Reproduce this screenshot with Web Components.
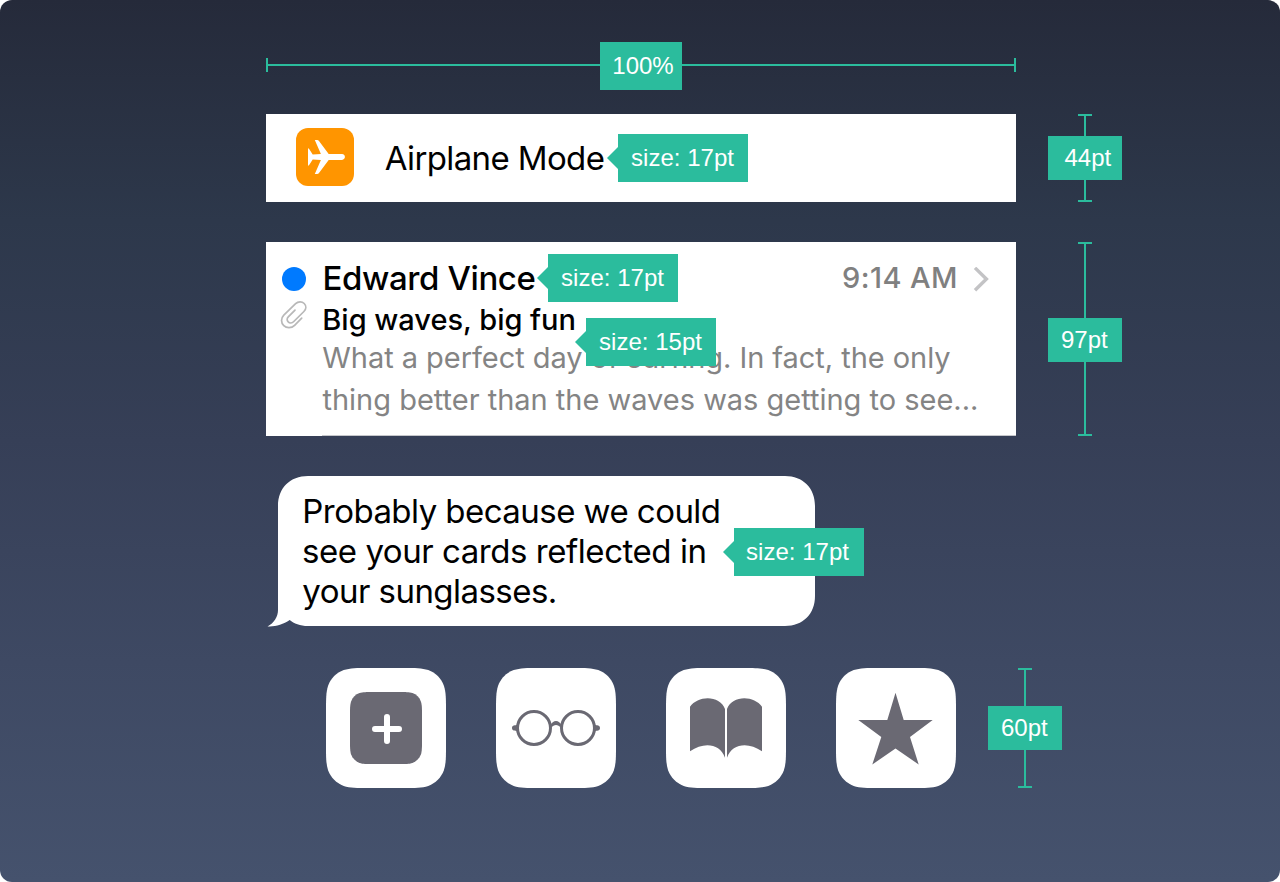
<!DOCTYPE html>
<html lang="en">
<head>
<meta charset="utf-8">
<title>Size specification</title>
<style>
  html, body { margin: 0; height: 100%; background: #fff; }
  body { font-family: Inter, "Liberation Sans", sans-serif; overflow: hidden; }
</style>
</head>
<body>
<spec-board>
  <h-ruler>100%</h-ruler>
  <spec-row>
    <setting-row><fit-line ink="219" size="33" dx="-1.3">Airplane Mode</fit-line></setting-row>
    <size-tag style="--x:352px;--y:20px">size: 17pt</size-tag>
    <v-ruler style="--shift:4px">44pt</v-ruler>
  </spec-row>
  <spec-row style="--mt:40px">
    <mail-row>
      <fit-line slot="name" ink="210" size="33" weight="500" dx="1.5">Edward Vince</fit-line>
      <fit-line slot="time" ink="113" size="29" weight="500" dx="2">9:14 AM</fit-line>
      <fit-line slot="subject" ink="250.500" size="29" weight="500" dx="1.3">Big waves, big fun</fit-line>
      <fit-line slot="body1" ink="628" size="29" dx="-.7">What a perfect day of surfing. In fact, the only</fit-line>
      <fit-line slot="body2" ink="654.500" size="29" dx=".5">thing better than the waves was getting to see...</fit-line>
    </mail-row>
    <size-tag style="--x:282px;--y:12px">size: 17pt</size-tag>
    <size-tag style="--x:320px;--y:76px">size: 15pt</size-tag>
    <v-ruler style="--shift:-1px;--drop:2px">97pt</v-ruler>
  </spec-row>
  <spec-row style="--mt:40px">
    <chat-bubble>
      <fit-line ink="414.500" size="33" dx="1.3">Probably because we could</fit-line>
      <fit-line ink="401.500" size="33">see your cards reflected in</fit-line>
      <fit-line ink="252.500" size="33" dx="-.7">your sunglasses.</fit-line>
    </chat-bubble>
    <size-tag style="--x:468px;--y:52px;--pad:12px">size: 17pt</size-tag>
  </spec-row>
  <spec-row style="--mt:42px;--indent:60px">
    <icon-strip>
      <app-tile icon="plus"></app-tile>
      <app-tile icon="glasses"></app-tile>
      <app-tile icon="book"></app-tile>
      <app-tile icon="star"></app-tile>
    </icon-strip>
    <v-ruler style="--shift:-1px">60pt</v-ruler>
  </spec-row>
</spec-board>

<script>
const define = (name, html, setup) => customElements.define(name, class extends HTMLElement {
  constructor() {
    super();
    const t = document.createElement('template');
    t.innerHTML = html;
    this.attachShadow({ mode: 'open' }).append(t.content.cloneNode(true));
  }
  connectedCallback() { if (setup) setup(this, this.shadowRoot); }
});

define('spec-board', `<style>
  :host { display: flex; flex-direction: column; box-sizing: border-box; width: 1280px; height: 882px;
    padding: 42px 0 0 266px; border-radius: 12px;
    background: linear-gradient(#252a3a 0, #2d384b 25%, #363f57 50%, #3e4963 75%, #45526d 100%); }
</style><slot></slot>`);

define('spec-row', `<style>
  :host { display: flex; position: relative; gap: 32px; margin-top: var(--mt, 24px); padding-left: var(--indent, 0); }
</style><slot></slot>`);

define('h-ruler', `<style>
  :host { display: flex; align-items: center; width: 750px; height: 48px; color: #fff; font: 24px "Liberation Sans", Arial, sans-serif; }
  i { width: 2px; height: 14px; background: #2bbc9d; margin-top: -2px; }
  b { flex: none; width: 332px; height: 2px; background: #2bbc9d; margin-top: -2px; }
  b.r { flex: 1; }
  span { width: 82px; line-height: 48px; box-sizing: border-box; padding-left: 4px; text-align: center; background: #2bbc9d; }
</style><i></i><b></b><span><slot></slot></span><b class="r"></b><i></i>`);

define('v-ruler', `<style>
  :host { display: flex; flex-direction: column; align-items: center; width: 74px; color: #fff; font: 24px "Liberation Sans", Arial, sans-serif; }
  i { width: 14px; height: 2px; background: #2bbc9d; }
  b { flex: 1; width: 2px; background: #2bbc9d; }
  b.top { padding-top: var(--drop, 0); }
  span { width: 74px; line-height: 44px; text-align: center; text-indent: calc(var(--shift, 0px) * 1.4); background: #2bbc9d; }
</style><i></i><b class="top"></b><span><slot></slot></span><b></b><i></i>`);

define('size-tag', `<style>
  :host { position: absolute; left: var(--x); top: var(--y); width: 130px; height: 48px; box-sizing: border-box; padding-left: var(--pad, 13px);
    background: #2bbc9d; color: #fff; font: 24px/48px "Liberation Sans", Arial, sans-serif; letter-spacing: .03px; white-space: nowrap; }
  :host::before { content: ""; position: absolute; left: -11px; top: 12.5px; border: solid transparent; border-width: 11.5px 11px 11.5px 0; border-right-color: #2bbc9d; }
</style><slot></slot>`);

/* One line of copy whose tracking is set so that its visible glyphs span the "ink" width. */
define('fit-line', `<style>
  :host { display: block; white-space: nowrap; font-family: Inter, "Liberation Sans", sans-serif; font-kerning: normal; }
</style><slot></slot>`, el => {
  const size = +el.getAttribute('size'), weight = el.getAttribute('weight') || '400';
  const text = el.textContent;
  const ctx = document.createElement('canvas').getContext('2d');
  ctx.font = `${weight} ${size}px Inter`;
  const m = ctx.measureText(text);
  const ink = m.actualBoundingBoxRight + m.actualBoundingBoxLeft;
  el.style.fontSize = size + 'px';
  el.style.fontWeight = weight;
  el.style.letterSpacing = (+el.getAttribute('ink') - ink) / (text.length - 1) + 'px';
  el.style.marginLeft = m.actualBoundingBoxLeft + (+el.getAttribute('dx') || 0) + 'px';
});

define('setting-row', `<style>
  :host { display: flex; align-items: center; box-sizing: border-box; width: 750px; height: 88px; padding-left: 30px; gap: 32px; background: #fff; color: #000; line-height: 40px; }
  svg { display: block; margin-top: -2px; }
</style><svg width="58" height="58" viewBox="0 0 58 58"><rect width="58" height="58" rx="12" fill="#ff9500"/>
<path fill="#fff" d="M12 20.3L13 20.7L16.7 26.5L24.9 26.1L18.800 12H21.200Q22.300 12 23 13L32.700 26.100H46C49.900 26.300 49.900 31.700 46 31.900H32.700L23 45Q22.300 46 21.200 46H18.800L24.900 31.900L16.700 31.500L13 37.300L12 37.700Z"/></svg><slot></slot>`);

define('mail-row', `<style>
  :host { display: grid; grid-template-columns: 57px 1fr; align-content: start; box-sizing: border-box; width: 750px; height: 194px; padding-top: 15px; background: #fff; color: #000; }
  .marks { display: flex; flex-direction: column; padding: 10px 0 0 14px; }
  .dot { width: 24px; height: 24px; margin-left: 2px; border-radius: 50%; background: #007aff; }
  .clip { margin-top: 10px; overflow: visible; }
  .head { display: flex; line-height: 42px; }
  .time { margin-left: auto; margin-right: 18px; color: #808080; line-height: 41px; width: 114px; }
  .chev { margin: 10px 27px 0 0; }
  .sub { line-height: 41px; }
  .b1 { line-height: 35px; color: #848484; }
  .b2 { line-height: 49px; color: #848484; margin-left: -1px; }
  .rule { grid-column: 1 / 3; height: 1px; margin: 11px 0 0 56px; background: #c6c7cb; }
</style>
<div class="marks"><div class="dot"></div>
<svg class="clip" width="28" height="28" viewBox="0 0 28 28" fill="none" stroke="#b8b8b8" stroke-width="1.7" stroke-linecap="round"><path d="M21.7 17.2L14.6 24.3C11.4 27.4 6.6 27.4 3.8 24.6C.8 21.6 .8 17.2 3.8 14.1L15.6 2.7C18.2 .2 21.9 .2 24.2 2.5C26.4 4.7 26.4 8 23.9 10.5L13.8 20.5C12 22.3 9.6 22.3 8.2 20.9C6.7 19.4 6.8 17.3 8.5 15.6L15 9.2"/></svg></div>
<div>
<div class="head"><slot name="name"></slot><div class="time"><slot name="time"></slot></div>
<svg class="chev" width="16" height="26" viewBox="0 0 16 26" fill="none" stroke="#c3c3c5" stroke-width="3.4"><path d="M2 .9L13.4 12L2 23.2"/></svg></div>
<div class="sub"><slot name="subject"></slot></div>
<div class="b1"><slot name="body1"></slot></div>
<div class="b2"><slot name="body2"></slot></div>
</div><div class="rule"></div>`);

define('chat-bubble', `<style>
  :host { display: grid; width: 549px; height: 150px; color: #000; line-height: 40px; }
  svg, div { grid-area: 1 / 1; }
  svg { overflow: visible; }
  div { padding: 15px 0 0 37px; }
</style><svg width="549" height="150" viewBox="0 0 549 150"><path fill="#fff" d="M12 30C12 12 24 0 42 0H519C537 0 549 12 549 30V120C549 138 537 150 519 150H42C34 150 28 147.5 23.7 144C17 148.5 9 151 1.5 150.4C8 147 12 141 12 134Z"/></svg>
<div><slot></slot></div>`);

define('icon-strip', `<style>:host { display: flex; gap: 50px; }</style><slot></slot>`);

/* Continuous-corner square: each corner is three cubic segments, scaled by r. */
const squircle = (x, y, s, r) => {
  const a = 1.52866, b = 1.08849, c = .86841, d = .63149, e = .07491, f = .37283, g = .16906;
  const q = [[a,0],[b,0],[c,0],[d,e],[f,g],[g,f],[e,d],[0,c],[0,b],[0,a]];
  const corner = (fx, fy, rev) => (rev ? [...q].reverse() : q).map(([u, v]) =>
    [(fx ? x + s - u * r : x + u * r).toFixed(2), (fy ? y + s - v * r : y + v * r).toFixed(2)].join(' '));
  return 'M' + [corner(0,0,false), corner(0,1,true), corner(1,1,false), corner(1,0,true)]
    .map(p => p[0] + 'C' + p.slice(1).join(' ')).join('L') + 'Z';
};
const icons = {
  plus: `<path d="${squircle(24, 24, 72, 15)}"/><path d="M61 49V73M49 61H73" stroke="#fff" stroke-width="6" stroke-linecap="round"/>`,
  glasses: `<g fill="none" stroke="#6a6973" stroke-width="3"><circle cx="38" cy="60" r="16.5"/><circle cx="82" cy="60" r="16.5"/></g>
    <path d="M54.500 57.500C56.500 51.500 63.500 51.500 65.500 57.500L64.500 59.500C62.500 56 57.500 56 55.500 59.500Z"/>
    <path d="M21 56.800C19.500 57.800 16 56.600 16 60S19.500 62.200 21 63.200ZM99 56.800C100.500 57.800 104 56.600 104 60S100.500 62.200 99 63.200Z"/>`,
  book: `<path d="M24 38.800C32 27 54 27 59 41V89.700C54 75.500 38 73.500 24 83.200ZM96 38.800C88 27 66 27 61 41V89.700C66 75.500 82 73.500 96 83.200Z"/>`,
  star: `<path d="M59.500 24.700L67.700 52H96.700L74 69L82.700 96.500L59.500 80.500L36.300 96.500L45.300 69L22.300 52H51.300Z"/>`
};
define('app-tile', `<style>:host { display: block; width: 120px; height: 120px; } svg { display: block; }</style>`, (el, root) => {
  root.innerHTML += `<svg width="120" height="120" viewBox="0 0 120 120" fill="#6a6973"><path fill="#fff" d="${squircle(0, 0, 120, 28)}"/>${icons[el.getAttribute('icon')]}</svg>`;
});
</script>
</body>
</html>
